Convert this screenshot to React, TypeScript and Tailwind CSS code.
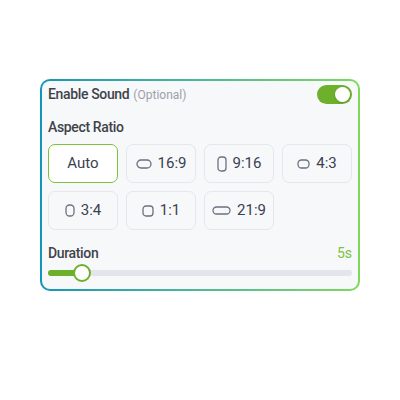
import React, { useState } from 'react';

type Ratio = { label: string; w: number; h: number; r: number };

const ratios: Ratio[] = [
  { label: '16:9', w: 14, h: 8, r: 4 },
  { label: '9:16', w: 8, h: 14, r: 3 },
  { label: '4:3', w: 11, h: 8, r: 3.5 },
  { label: '3:4', w: 8, h: 11, r: 3.5 },
  { label: '1:1', w: 10, h: 10, r: 3 },
  { label: '21:9', w: 17, h: 7, r: 3.5 },
];

const RatioIcon = ({ w, h, r }: { w: number; h: number; r: number }) => (
  <svg width={w + 2} height={h + 2} viewBox={`0 0 ${w + 2} ${h + 2}`} className="shrink-0">
    <rect x={1} y={1} width={w} height={h} rx={r} fill="none" stroke="#6b7280" strokeWidth={1.3} />
  </svg>
);

export default function App() {
  const [sound, setSound] = useState(true);
  const [selected, setSelected] = useState('Auto');
  const [duration] = useState(5);

  const btn = (active: boolean) =>
    `h-[39px] rounded-[7px] border flex items-center justify-center gap-[6px] text-[15px] text-[#3a4150] ${
      active ? 'border-[#7cc23f] bg-white' : 'border-[#e5e7eb] bg-[#f7f8fa]'
    }`;

  return (
    <div className="w-[400px] h-[400px] bg-white pt-[79px] pl-[40px]" style={{ fontFamily: 'Roboto, "Noto Sans", sans-serif' }}>
      <div className="w-[320px] rounded-[10px] p-[2px] bg-gradient-to-r from-[#1295b9] to-[#7ed957]">
        <div className="rounded-[8px] bg-[#f7f8fa] px-[6px] pt-[3px] pb-[6px]">
          <div className="flex items-center justify-between h-5">
            <div className="flex items-baseline gap-1">
              <span className="text-[14px] font-medium tracking-[-0.025em] text-[#3f434a]">Enable Sound</span>
              <span className="text-[12px] text-[#9ca1a9]">(Optional)</span>
            </div>
            <button
              onClick={() => setSound(!sound)}
              className={`w-[35px] h-[19px] rounded-full p-[2px] flex items-center ${sound ? 'bg-[#6db02c] justify-end' : 'bg-gray-300 justify-start'}`}
            >
              <span className="w-[15px] h-[15px] rounded-full bg-white shadow-sm" />
            </button>
          </div>

          <div className="mt-[13px] text-[14px] font-medium tracking-[-0.025em] text-[#3f434a] leading-5">Aspect Ratio</div>

          <div className="mt-[7px] grid grid-cols-4 gap-x-[8px] gap-y-[8px]">
            <button onClick={() => setSelected('Auto')} className={btn(selected === 'Auto')}>
              Auto
            </button>
            {ratios.map(r => (
              <button key={r.label} onClick={() => setSelected(r.label)} className={btn(selected === r.label)}>
                <RatioIcon w={r.w} h={r.h} r={r.r} />
                <span>{r.label}</span>
              </button>
            ))}
          </div>

          <div className="mt-[13px] flex items-center justify-between leading-5">
            <span className="text-[14px] font-medium tracking-[-0.025em] text-[#3f434a]">Duration</span>
            <span className="text-[14px] text-[#7cc23f]">{duration}s</span>
          </div>

          <div className="relative h-5 flex items-center">
            <div className="w-full h-[6px] rounded-full bg-[#e2e6ec]">
              <div className="h-full rounded-full bg-[#6db02c] w-[34px]" />
            </div>
            <div className="absolute left-[25px] top-[1px] w-[18px] h-[18px] rounded-full bg-white border-2 border-[#6db02c]" />
          </div>
        </div>
      </div>
    </div>
  );
}
